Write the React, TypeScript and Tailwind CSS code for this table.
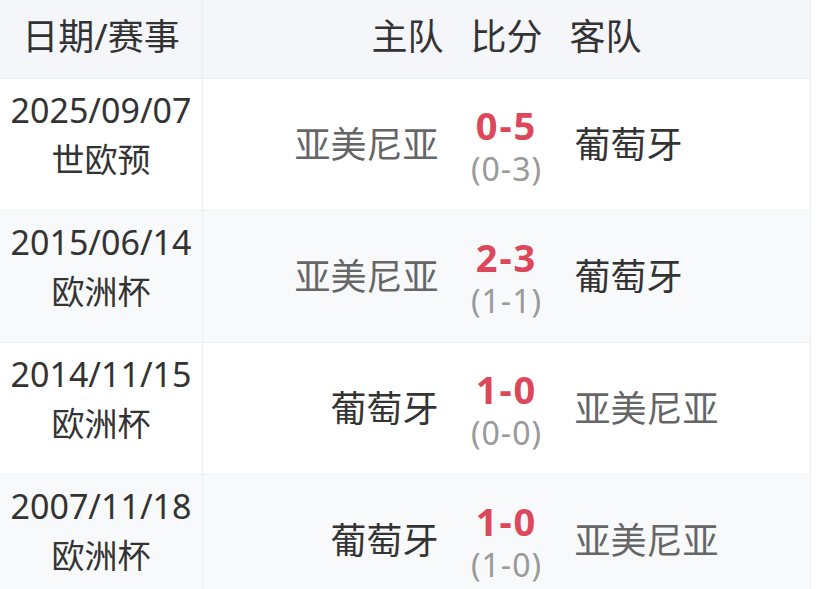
type Match = {
    date: string;
    league: string;
    home: string;
    away: string;
    score: string;
    half: string;
};

const matches: Match[] = [
    { date: '2025/09/07', league: '世欧预', home: '亚美尼亚', away: '葡萄牙', score: '0-5', half: '(0-3)' },
    { date: '2015/06/14', league: '欧洲杯', home: '亚美尼亚', away: '葡萄牙', score: '2-3', half: '(1-1)' },
    { date: '2014/11/15', league: '欧洲杯', home: '葡萄牙', away: '亚美尼亚', score: '1-0', half: '(0-0)' },
    { date: '2007/11/18', league: '欧洲杯', home: '葡萄牙', away: '亚美尼亚', score: '1-0', half: '(1-0)' },
];

const teamColor = (name: string) =>
    name === '葡萄牙' ? 'text-[#333333]' : 'text-[#666666]';

export default function App() {
    return (
        <div
            className="h-[589px] w-[824px] overflow-hidden bg-white"
            style={{ fontFamily: '"Noto Sans", Roboto, "Noto Sans CJK SC", sans-serif' }}
        >
            <div className="w-[811px] border-r border-[#eceef2]">
                {/* 表头 */}
                <div className="flex h-[78px] items-center bg-[#f5f6fa] text-[36px] text-[#333333]">
                    <div className="flex h-full w-[203px] shrink-0 items-center justify-center border-r border-[#eceef2] pb-[4px]">
                        日期/赛事
                    </div>
                    <div className="flex flex-1 items-center pb-[4px]">
                        <div className="flex-1 text-right">主队</div>
                        <div className="w-[126px] text-center">比分</div>
                        <div className="flex-1 text-left">客队</div>
                    </div>
                </div>

                {matches.map((m, i) => (
                    <div
                        key={m.date}
                        className={`flex h-[132px] border-t border-[#eceef2] ${i % 2 === 1 ? 'bg-[#f8f9fb]' : 'bg-white'}`}
                    >
                        <div className="flex w-[203px] shrink-0 flex-col items-center border-r border-[#eceef2] pt-[8px] text-[#333333]">
                            <span className="text-[34px] leading-[46px]">{m.date}</span>
                            <span className="text-[33px] leading-[54px]">{m.league}</span>
                        </div>
                        <div className="flex flex-1 items-center">
                            <div className={`flex-1 text-right text-[36px] ${teamColor(m.home)}`}>
                                {m.home}
                            </div>
                            <div className="flex w-[136px] flex-col items-center pt-[2px]">
                                <span className="text-[38px] leading-[46px] font-bold tracking-[2px] text-[#dc4759]">
                                    {m.score}
                                </span>
                                <span className="text-[32px] leading-[42px] tracking-[1px] text-[#999999]">
                                    {m.half}
                                </span>
                            </div>
                            <div className={`flex-1 text-left text-[36px] ${teamColor(m.away)}`}>
                                {m.away}
                            </div>
                        </div>
                    </div>
                ))}
            </div>
        </div>
    );
}
